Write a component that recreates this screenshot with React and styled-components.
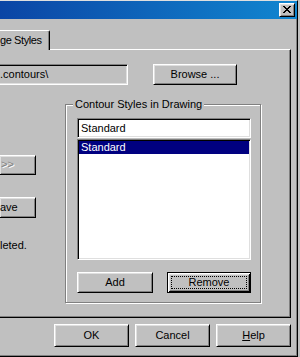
import React from "react";
import styled, { createGlobalStyle } from "styled-components";

const GlobalStyle = createGlobalStyle`
  html, body {
    margin: 0;
    padding: 0;
    background: #c0c0c0;
  }
  body {
    font-family: "Liberation Sans", Arial, sans-serif;
    font-size: 11px;
    line-height: 13px;
    color: #000;
  }
`;

const Screen = styled.div`
  width: 300px;
  height: 357px;
  overflow: hidden;
  background: #c0c0c0;
`;

const Window = styled.div`
  box-sizing: border-box;
  width: 298px;
  height: 357px;
  display: flex;
  flex-direction: column;
  background: #c0c0c0;
  border-top: 1px solid #dfdfdf;
  border-right: 1px solid #000;
  border-bottom: 1px solid #000;
  box-shadow: inset -1px -1px 0 #808080;
`;

const TitleBar = styled.div`
  flex: none;
  height: 18px;
  display: flex;
  align-items: center;
  justify-content: flex-end;
  padding-right: 2px;
  background: linear-gradient(to right, #0b45a5, #1186d0);
`;

const CloseButton = styled.div`
  box-sizing: border-box;
  width: 16px;
  height: 14px;
  display: flex;
  align-items: center;
  justify-content: center;
  background: #c0c0c0;
  border: 1px solid;
  border-color: #fff #000 #000 #fff;
  box-shadow: inset 1px 1px 0 #dfdfdf, inset -1px -1px 0 #808080;

  svg {
    display: block;
    margin-top: -1px;
  }
`;

const Body = styled.div`
  flex: 1;
  display: flex;
  flex-direction: column;
  padding: 11px 6px 0 0;
`;

const TabStrip = styled.div`
  flex: none;
  display: flex;
  height: 20px;
  margin-bottom: -1px;
  position: relative;
  z-index: 1;
`;

const Tab = styled.div`
  box-sizing: border-box;
  height: 20px;
  padding: 0 7px 1px 0;
  display: flex;
  align-items: center;
  white-space: nowrap;
  letter-spacing: -0.4px;
  background: #c0c0c0;
  border-top: 1px solid #fff;
  border-right: 1px solid #000;
  border-top-right-radius: 2px;
  box-shadow: inset -1px 0 0 #808080;
`;

const Panel = styled.div`
  box-sizing: border-box;
  flex: none;
  height: 269px;
  display: flex;
  flex-direction: column;
  padding-top: 14px;
  border-top: 1px solid #fff;
  border-right: 1px solid #000;
  border-bottom: 1px solid #000;
  box-shadow: inset -1px -1px 0 #808080;
`;

const PathRow = styled.div`
  display: flex;
  align-items: flex-start;
  gap: 25px;
`;

const PathField = styled.div`
  box-sizing: border-box;
  width: 128px;
  height: 21px;
  display: flex;
  align-items: center;
  white-space: nowrap;
  overflow: hidden;
  background: #c0c0c0;
  border-top: 1px solid #808080;
  border-right: 1px solid #fff;
  border-bottom: 1px solid #fff;
  box-shadow: inset 0 1px 0 #000, inset -1px -1px 0 #dfdfdf;
`;

const Button = styled.div`
  box-sizing: border-box;
  flex: none;
  width: ${(p) => p.$w || 75}px;
  height: ${(p) => p.$h || 23}px;
  display: flex;
  align-items: center;
  justify-content: center;
  padding-bottom: 1px;
  white-space: nowrap;
  background: #c0c0c0;
  border: 1px solid;
  border-color: #fff #000 #000 #fff;
  box-shadow: inset 1px 1px 0 #dfdfdf, inset -1px -1px 0 #808080;
`;

const DefaultButton = styled(Button)`
  position: relative;
  border-color: #000;
  box-shadow: inset 1px 1px 0 #fff, inset -1px -1px 0 #000,
    inset 2px 2px 0 #dfdfdf, inset -2px -2px 0 #808080;

  &::after {
    content: "";
    position: absolute;
    top: 3px;
    left: 3px;
    right: 3px;
    bottom: 3px;
    border: 1px dotted #000;
  }
`;

const CutButton = styled(Button)`
  width: 36px;
  justify-content: flex-start;
  padding-left: ${(p) => p.$indent || 0}px;
  border-left: none;
  color: ${(p) => (p.$disabled ? "#808080" : "#000")};
  text-shadow: ${(p) => (p.$disabled ? "1px 1px 0 #fff" : "none")};
`;

const LowerRow = styled.div`
  display: flex;
  align-items: flex-start;
  margin-top: 19px;
`;

const SideColumn = styled.div`
  width: 36px;
  flex: none;
  display: flex;
  flex-direction: column;
  padding-top: 51px;
`;

const Note = styled.div`
  white-space: nowrap;
  margin-top: ${(p) => p.$top || 0}px;
`;

const GroupBox = styled.div`
  box-sizing: border-box;
  position: relative;
  width: 196px;
  height: 199px;
  margin-left: 29px;
  display: flex;
  flex-direction: column;
  padding: 13px 9px 9px 11px;
  border: 1px solid #808080;
  box-shadow: 1px 1px 0 #fff, inset 1px 1px 0 #fff;
`;

const GroupLabel = styled.div`
  position: absolute;
  top: -7px;
  left: 7px;
  padding: 0 2px;
  background: #c0c0c0;
  white-space: nowrap;
`;

const Sunken = styled.div`
  box-sizing: border-box;
  background: #fff;
  border: 1px solid;
  border-color: #808080 #fff #fff #808080;
  box-shadow: inset 1px 1px 0 #000, inset -1px -1px 0 #dfdfdf;
`;

const StyleInput = styled(Sunken)`
  height: 20px;
  display: flex;
  align-items: center;
  padding: 0 3px;
`;

const StyleList = styled(Sunken)`
  height: 121px;
  margin-top: 1px;
  padding: 1px;
`;

const ListItem = styled.div`
  height: 13px;
  line-height: 13px;
  padding-left: 2px;
  background: ${(p) => (p.$selected ? "#000080" : "transparent")};
  color: ${(p) => (p.$selected ? "#fff" : "#000")};
`;

const GroupButtons = styled.div`
  display: flex;
  justify-content: space-between;
  margin-top: 12px;
`;

const DialogButtons = styled.div`
  display: flex;
  justify-content: flex-end;
  gap: 6px;
  margin-top: 6px;
`;

function CloseGlyph() {
  const cells = [
    [0, 0], [1, 0], [6, 0], [7, 0],
    [1, 1], [2, 1], [5, 1], [6, 1],
    [2, 2], [3, 2], [4, 2], [5, 2],
    [3, 3], [4, 3],
    [2, 4], [3, 4], [4, 4], [5, 4],
    [1, 5], [2, 5], [5, 5], [6, 5],
    [0, 6], [1, 6], [6, 6], [7, 6],
  ];
  return (
    <svg width="8" height="7" viewBox="0 0 8 7" shapeRendering="crispEdges">
      {cells.map(([x, y]) => (
        <rect key={`${x}-${y}`} x={x} y={y} width="1" height="1" fill="#000" />
      ))}
    </svg>
  );
}

export default function App() {
  return (
    <Screen>
      <GlobalStyle />
      <Window>
        <TitleBar>
          <CloseButton>
            <CloseGlyph />
          </CloseButton>
        </TitleBar>
        <Body>
          <TabStrip>
            <Tab>ge Styles</Tab>
          </TabStrip>
          <Panel>
            <PathRow>
              <PathField>.contours\</PathField>
              <Button $w={84} $h={21}>Browse ...</Button>
            </PathRow>
            <LowerRow>
              <SideColumn>
                <CutButton $h={20} $indent={1} $disabled>&gt;&gt;</CutButton>
                <Note $top={22}>
                  <CutButton $h={21}>ave</CutButton>
                </Note>
                <Note $top={21}>leted.</Note>
              </SideColumn>
              <GroupBox>
                <GroupLabel>Contour Styles in Drawing</GroupLabel>
                <StyleInput>Standard</StyleInput>
                <StyleList>
                  <ListItem $selected>Standard</ListItem>
                </StyleList>
                <GroupButtons>
                  <Button $w={76} $h={21}>Add</Button>
                  <DefaultButton $w={84} $h={21}>Remove</DefaultButton>
                </GroupButtons>
              </GroupBox>
            </LowerRow>
          </Panel>
          <DialogButtons>
            <Button>OK</Button>
            <Button>Cancel</Button>
            <Button>
              <span>
                <u>H</u>elp
              </span>
            </Button>
          </DialogButtons>
        </Body>
      </Window>
    </Screen>
  );
}
